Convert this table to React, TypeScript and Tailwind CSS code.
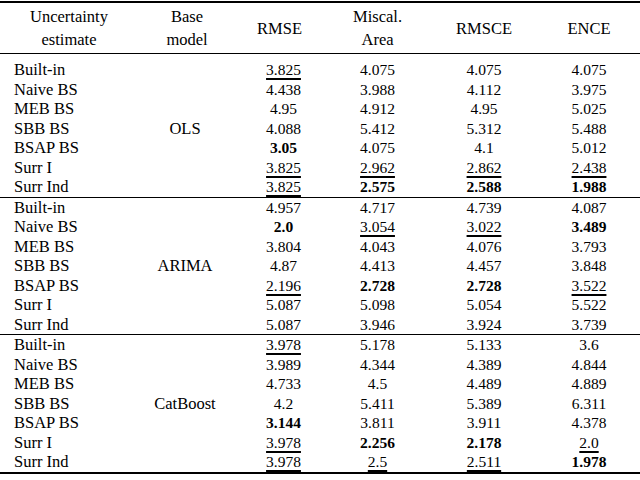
import React from 'react';

type Cell = { v: string; b?: boolean; u?: boolean };

interface Group {
    model: string;
    rows: { name: string; cells: Cell[] }[];
}

const c = (v: string, flag?: 'b' | 'u'): Cell => ({ v, b: flag === 'b', u: flag === 'u' });

const GROUPS: Group[] = [
    {
        model: 'OLS',
        rows: [
            { name: 'Built-in', cells: [c('3.825', 'u'), c('4.075'), c('4.075'), c('4.075')] },
            { name: 'Naive BS', cells: [c('4.438'), c('3.988'), c('4.112'), c('3.975')] },
            { name: 'MEB BS', cells: [c('4.95'), c('4.912'), c('4.95'), c('5.025')] },
            { name: 'SBB BS', cells: [c('4.088'), c('5.412'), c('5.312'), c('5.488')] },
            { name: 'BSAP BS', cells: [c('3.05', 'b'), c('4.075'), c('4.1'), c('5.012')] },
            { name: 'Surr I', cells: [c('3.825', 'u'), c('2.962', 'u'), c('2.862', 'u'), c('2.438', 'u')] },
            { name: 'Surr Ind', cells: [c('3.825', 'u'), c('2.575', 'b'), c('2.588', 'b'), c('1.988', 'b')] },
        ],
    },
    {
        model: 'ARIMA',
        rows: [
            { name: 'Built-in', cells: [c('4.957'), c('4.717'), c('4.739'), c('4.087')] },
            { name: 'Naive BS', cells: [c('2.0', 'b'), c('3.054', 'u'), c('3.022', 'u'), c('3.489', 'b')] },
            { name: 'MEB BS', cells: [c('3.804'), c('4.043'), c('4.076'), c('3.793')] },
            { name: 'SBB BS', cells: [c('4.87'), c('4.413'), c('4.457'), c('3.848')] },
            { name: 'BSAP BS', cells: [c('2.196', 'u'), c('2.728', 'b'), c('2.728', 'b'), c('3.522', 'u')] },
            { name: 'Surr I', cells: [c('5.087'), c('5.098'), c('5.054'), c('5.522')] },
            { name: 'Surr Ind', cells: [c('5.087'), c('3.946'), c('3.924'), c('3.739')] },
        ],
    },
    {
        model: 'CatBoost',
        rows: [
            { name: 'Built-in', cells: [c('3.978', 'u'), c('5.178'), c('5.133'), c('3.6')] },
            { name: 'Naive BS', cells: [c('3.989'), c('4.344'), c('4.389'), c('4.844')] },
            { name: 'MEB BS', cells: [c('4.733'), c('4.5'), c('4.489'), c('4.889')] },
            { name: 'SBB BS', cells: [c('4.2'), c('5.411'), c('5.389'), c('6.311')] },
            { name: 'BSAP BS', cells: [c('3.144', 'b'), c('3.811'), c('3.911'), c('4.378')] },
            { name: 'Surr I', cells: [c('3.978', 'u'), c('2.256', 'b'), c('2.178', 'b'), c('2.0', 'u')] },
            { name: 'Surr Ind', cells: [c('3.978', 'u'), c('2.5', 'u'), c('2.511', 'u'), c('1.978', 'b')] },
        ],
    },
];

const COLS = 'grid grid-cols-[128px_114px_83px_105px_108px_102px]';

const Value: React.FC<{ cell: Cell }> = ({ cell }) => (
    <div className="text-center text-[15.5px]">
        <span
            className={`${cell.b ? 'font-bold' : ''} ${
                cell.u ? 'underline decoration-[1.5px] underline-offset-[3px]' : ''
            }`}
        >
            {cell.v}
        </span>
    </div>
);

export default function App() {
    return (
        <div className="w-[640px] h-[480px] bg-white text-black text-[16.5px] overflow-hidden font-['Liberation_Serif','DejaVu_Serif',serif]">
            <div className="mt-px border-t-2 border-black" />

            {/* header */}
            <div className={`${COLS} leading-[23px] py-[2px] text-center`}>
                <div className="pl-[10px]">Uncertainty<br />estimate</div>
                <div className="pl-[4px]">Base<br />model</div>
                <div className="self-center pr-[8px]">RMSE</div>
                <div>Miscal.<br />Area</div>
                <div className="self-center">RMSCE</div>
                <div className="self-center">ENCE</div>
            </div>
            <div className="border-t border-black" />

            <div className="pt-[6px]">
                {GROUPS.map((g, gi) => (
                    <div key={g.model} className={gi > 0 ? 'border-t-[1.5px] border-black' : ''}>
                        {g.rows.map((r, ri) => (
                            <div key={r.name} className={`${COLS} leading-[19.5px]`}>
                                <div className="pl-[14px]">{r.name}</div>
                                <div className="text-center">{ri === 3 ? g.model : ''}</div>
                                {r.cells.map((cell, ci) => (
                                    <Value key={ci} cell={cell} />
                                ))}
                            </div>
                        ))}
                    </div>
                ))}
            </div>
            <div className="border-t-2 border-black" />
        </div>
    );
}
